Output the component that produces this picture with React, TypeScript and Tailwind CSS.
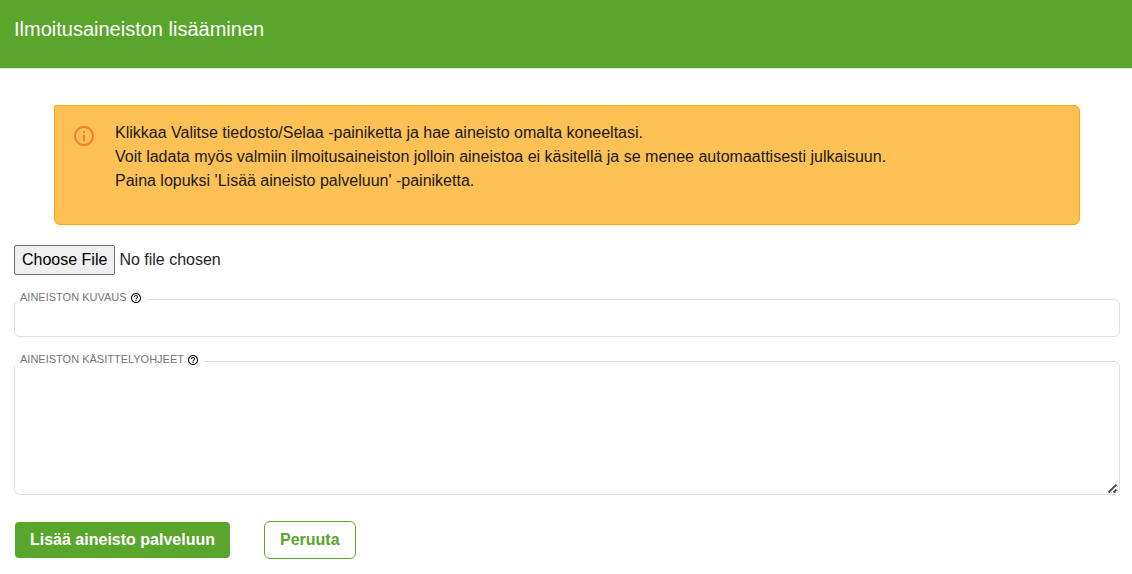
import type { ReactNode } from "react";
import { MdHelpOutline, MdInfoOutline } from "react-icons/md";

function Field({ id, label, children }: { id: string; label: string; children: ReactNode }) {
  return (
    <div className="relative">
      {children}
      <label
        htmlFor={id}
        className="absolute -top-2 left-0 flex h-3 items-center gap-[3px] bg-white pr-[5px] pl-1.5 text-[11px] leading-none text-[#767676] uppercase"
      >
        {label}
        <MdHelpOutline className="mt-px size-3 text-black" aria-hidden="true" />
      </label>
    </div>
  );
}

export default function App() {
  return (
    <div className="bg-white font-['Liberation_Sans',Arial,sans-serif] text-base text-[#212529]">
      <header className="border-b border-[#dee2e6] bg-[#5aa52b] px-3.5 pt-3.5 pb-6">
        <h1 className="text-xl leading-[30px] text-white">Ilmoitusaineiston lisääminen</h1>
      </header>

      <main className="pt-9 pr-3 pb-4 pl-3.5">
        <div
          role="note"
          className="mr-10 ml-10 flex gap-[19px] rounded-md rounded-tl-xs border border-[#ffa500] bg-[#fdc156] px-[17px] pt-[15px] pb-[31px] text-[#1a1a1a]"
        >
          <MdInfoOutline className="mt-[3px] size-6 shrink-0 text-[#ff7733]" aria-hidden="true" />
          <p className="leading-6">
            Klikkaa Valitse tiedosto/Selaa -painiketta ja hae aineisto omalta koneeltasi.
            <br />
            Voit ladata myös valmiin ilmoitusaineiston jolloin aineistoa ei käsitellä ja se menee automaattisesti
            julkaisuun.
            <br />
            Paina lopuksi 'Lisää aineisto palveluun' -painiketta.
          </p>
        </div>

        <form onSubmit={(event) => event.preventDefault()}>
          <input
            type="file"
            aria-label="Valitse tiedosto"
            className="mt-5 block w-full leading-6 file:rounded-xs file:border file:border-[#767676] file:bg-[#efefef] file:px-[7px] file:py-0.5 file:text-black"
          />

          <div className="mt-6 flex flex-col gap-6">
            <Field id="kuvaus" label="Aineiston kuvaus">
              <input
                id="kuvaus"
                type="text"
                className="block h-[38px] w-full rounded-md border border-[#dedfe5] px-3 outline-none"
              />
            </Field>
            <Field id="ohjeet" label="Aineiston käsittelyohjeet">
              <textarea
                id="ohjeet"
                className="block h-[134px] w-full resize rounded-md border border-[#dedfe5] px-3 py-2 outline-none"
              />
              <svg
                className="pointer-events-none absolute right-px bottom-px size-3"
                viewBox="0 0 12 12"
                fill="none"
                stroke="#4d4d4d"
                strokeWidth="1.8"
                aria-hidden="true"
              >
                <rect x="0" y="0" width="10.5" height="10.5" fill="#fff" stroke="none" />
                <path d="M1.5 10.5 9.5 2.5M6.5 10.5 9.5 7.5" />
              </svg>
            </Field>
          </div>

          <div className="mt-[26px] ml-px flex items-center gap-[34px]">
            <button type="submit" className="h-9 rounded bg-[#5aa52b] px-[15px] font-bold text-white">
              Lisää aineisto palveluun
            </button>
            <button
              type="button"
              className="h-[38px] rounded-md border border-[#5aa52b] bg-white px-[15px] font-bold text-[#5aa52b]"
            >
              Peruuta
            </button>
          </div>
        </form>
      </main>
    </div>
  );
}
